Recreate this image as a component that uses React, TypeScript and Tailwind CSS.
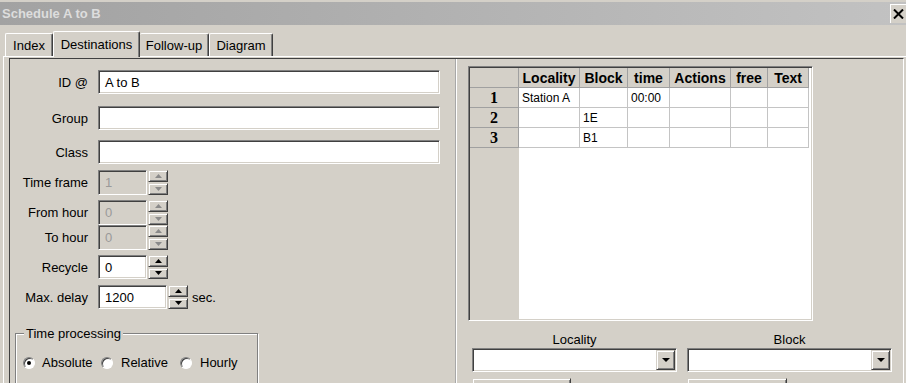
import React from "react"

const sunken =
  "border border-t-[#808080] border-l-[#808080] border-b-white border-r-white shadow-[inset_1px_1px_0_#404040,inset_-1px_-1px_0_#d4d0c8]"
const raised =
  "border border-t-[#d4d0c8] border-l-[#d4d0c8] border-b-[#404040] border-r-[#404040] shadow-[inset_1px_1px_0_#ffffff,inset_-1px_-1px_0_#808080]"

function SpinBtn({ up, disabled }: { up?: boolean; disabled?: boolean }) {
  return (
    <div className={`flex-1 bg-[#d4d0c8] flex items-center justify-center ${raised}`}>
      <svg width="7" height="4" viewBox="0 0 7 4">
        <path d={up ? "M3.5 0L7 4H0Z" : "M0 0H7L3.5 4Z"} fill={disabled ? "#8a8a8a" : "#000"} />
      </svg>
    </div>
  )
}

function Spin({ disabled }: { disabled?: boolean }) {
  return (
    <div className="ml-[1px] flex h-full w-[20px] flex-col gap-[1px]">
      <SpinBtn up disabled={disabled} />
      <SpinBtn disabled={disabled} />
    </div>
  )
}

function Row({
  label,
  children,
  className = "",
}: {
  label: string
  children: React.ReactNode
  className?: string
}) {
  return (
    <div className={`flex items-center ${className}`}>
      <span className="mr-[10px] w-[78px] shrink-0 text-right">{label}</span>
      {children}
    </div>
  )
}

function TextBox({ value = "", w, disabled }: { value?: string; w: string; disabled?: boolean }) {
  return (
    <div
      className={`${w} flex h-full items-center pl-[6px] ${sunken} ${
        disabled ? "bg-[#d4d0c8] text-[#9a9a9a]" : "bg-white"
      }`}
    >
      {value}
    </div>
  )
}

function Radio({ checked }: { checked?: boolean }) {
  return (
    <div className="flex h-[12px] w-[12px] shrink-0 items-center justify-center rounded-full border border-t-[#808080] border-l-[#808080] border-b-white border-r-white bg-white shadow-[inset_1px_1px_0_#404040]">
      {checked && <div className="h-[4px] w-[4px] rounded-full bg-black" />}
    </div>
  )
}

const cols = [
  { name: "Locality", w: "w-[61px]" },
  { name: "Block", w: "w-[48px]" },
  { name: "time", w: "w-[42px]" },
  { name: "Actions", w: "w-[61px]" },
  { name: "free", w: "w-[37px]" },
  { name: "Text", w: "w-[41px]" },
]

const rows = [
  ["Station A", "", "00:00", "", "", ""],
  ["", "1E", "", "", "", ""],
  ["", "B1", "", "", "", ""],
]

function Combo() {
  return (
    <div className={`flex h-[24px] w-[205px] justify-end bg-white pr-[1px] pt-[1px] ${sunken}`}>
      <div className={`flex h-[20px] w-[19px] items-center justify-center bg-[#d4d0c8] ${raised}`}>
        <svg width="8" height="4" viewBox="0 0 8 4">
          <path d="M0 0H8L4 4Z" fill="#000" />
        </svg>
      </div>
    </div>
  )
}

export default function App() {
  return (
    <div className="h-[383px] w-[906px] overflow-hidden bg-[#d4d0c8] font-['Liberation_Sans',Arial,sans-serif] text-[13px] leading-none text-black">
      {/* title bar */}
      <div className="pt-[2px]">
        <div className="flex h-[23px] items-center justify-between bg-linear-to-r from-[#a2a2a2] to-[#c2c2c2] pl-[2px]">
          <span className="font-bold text-[#dddddd]">Schedule A to B</span>
          <div className="flex h-[19px] w-[16px] items-center justify-center border-t border-l border-white bg-[#d4d0c8]">
            <svg width="11" height="10" viewBox="0 0 11 10">
              <path d="M1 0.5L10 9.5M10 0.5L1 9.5" stroke="#000" strokeWidth="2" />
            </svg>
          </div>
        </div>
      </div>

      {/* tabs */}
      <div className="mt-[6px] flex h-[25px] items-end pl-[5px]">
        <div className="flex h-[23px] w-[48px] items-center justify-center rounded-t-[2px] border-t border-l border-r border-t-white border-l-white border-r-[#404040] pt-[1px] shadow-[inset_-1px_0_0_#808080]">
          Index
        </div>
        <div className="relative z-10 -mb-[1px] flex h-[26px] w-[87px] items-start justify-center rounded-t-[2px] border-t border-l border-r border-t-white border-l-white border-r-[#404040] bg-[#d4d0c8] pt-[6px] shadow-[inset_-1px_0_0_#808080]">
          Destinations
        </div>
        <div className="flex h-[23px] w-[69px] items-center justify-center rounded-t-[2px] border-t border-r border-t-white border-r-[#404040] pt-[1px] shadow-[inset_-1px_0_0_#808080]">
          Follow-up
        </div>
        <div className="flex h-[23px] w-[64px] items-center justify-center rounded-t-[2px] border-t border-l border-r border-t-white border-l-white border-r-[#404040] pt-[1px] shadow-[inset_-1px_0_0_#808080]">
          Diagram
        </div>
      </div>

      {/* tab panel */}
      <div className="ml-[3px] h-[400px] border-t border-l border-white">
        <div className="ml-[5px] mt-[1px] flex h-[400px] w-[895px] border-t border-l border-r border-t-[#404040] border-l-[#404040] border-r-white">
          {/* left pane */}
          <div className="w-[445px] shrink-0 pt-[11px]">
            <Row label="ID @" className="h-[24px]">
              <TextBox value="A to B" w="w-[342px]" />
            </Row>
            <Row label="Group" className="mt-[12px] h-[24px]">
              <TextBox w="w-[342px]" />
            </Row>
            <Row label="Class" className="mt-[10px] h-[24px]">
              <TextBox w="w-[342px]" />
            </Row>
            <Row label="Time frame" className="mt-[6px] h-[25px]">
              <TextBox value="1" w="w-[49px]" disabled />
              <Spin disabled />
            </Row>
            <Row label="From hour" className="mt-[5px] h-[25px]">
              <TextBox value="0" w="w-[49px]" disabled />
              <Spin disabled />
            </Row>
            <Row label="To hour" className="h-[25px]">
              <TextBox value="0" w="w-[49px]" disabled />
              <Spin disabled />
            </Row>
            <Row label="Recycle" className="mt-[5px] h-[24px]">
              <TextBox value="0" w="w-[49px]" />
              <Spin />
            </Row>
            <Row label="Max. delay" className="mt-[6px] h-[24px]">
              <TextBox value="1200" w="w-[69px]" />
              <Spin />
              <span className="ml-[4px]">sec.</span>
            </Row>

            {/* Time processing group */}
            <div className="relative ml-[5px] mt-[24px] h-[60px] w-[243px] border border-[#808080] shadow-[1px_1px_0_#ffffff,inset_1px_1px_0_#ffffff]">
              <span className="absolute -top-[7px] left-[8px] bg-[#d4d0c8] px-[2px]">Time processing</span>
              <div className="flex items-center pl-[7px] pt-[22px]">
                <div className="flex w-[78px] items-center gap-[7px]">
                  <Radio checked />
                  <span>Absolute</span>
                </div>
                <div className="flex w-[79px] items-center gap-[8px]">
                  <Radio />
                  <span>Relative</span>
                </div>
                <div className="flex items-center gap-[8px]">
                  <Radio />
                  <span>Hourly</span>
                </div>
              </div>
            </div>
          </div>

          {/* splitter */}
          <div className="w-[1px] shrink-0 bg-[#a8a8a8]" />
          <div className="w-[1px] shrink-0 bg-white" />

          {/* right pane */}
          <div className="flex-1 pt-[7px]">
            <div className={`ml-[11px] flex h-[255px] w-[345px] bg-white p-[1px] ${sunken}`}>
              <div className="h-full w-[49px] shrink-0 bg-[#d4d0c8]">
                <div className="h-[20px] border-r border-b border-[#a0a0a0]" />
                {rows.map((_, i) => (
                  <div
                    key={i}
                    className="flex h-[20px] items-center justify-center border-r border-b border-[#a0a0a0] font-['Liberation_Serif',serif] text-[16px] font-bold"
                  >
                    {i + 1}
                  </div>
                ))}
              </div>
              <div>
                <div className="flex h-[20px]">
                  {cols.map((c) => (
                    <div
                      key={c.name}
                      className={`${c.w} flex items-center justify-center border-r border-b border-[#a0a0a0] bg-[#d4d0c8] text-[14px] font-bold`}
                    >
                      {c.name}
                    </div>
                  ))}
                </div>
                {rows.map((r, i) => (
                  <div key={i} className="flex h-[20px]">
                    {cols.map((c, j) => (
                      <div
                        key={c.name}
                        className={`${c.w} flex items-center border-r border-b border-[#c4c4c4] pl-[3px] text-[12px]`}
                      >
                        {r[j]}
                      </div>
                    ))}
                  </div>
                ))}
              </div>
            </div>

            <div className="ml-[15px] mt-[10px] flex gap-[10px]">
              <div className="flex w-[205px] flex-col">
                <div className="flex h-[16px] items-center justify-center">Locality</div>
                <div className="mt-[1px]">
                  <Combo />
                </div>
                <div className={`mt-[6px] h-[22px] w-[99px] bg-[#d4d0c8] ${raised}`} />
              </div>
              <div className="flex w-[205px] flex-col">
                <div className="flex h-[16px] items-center justify-center">Block</div>
                <div className="mt-[1px]">
                  <Combo />
                </div>
                <div className={`mt-[6px] h-[22px] w-[100px] bg-[#d4d0c8] ${raised}`} />
              </div>
            </div>
          </div>
        </div>
      </div>
    </div>
  )
}
